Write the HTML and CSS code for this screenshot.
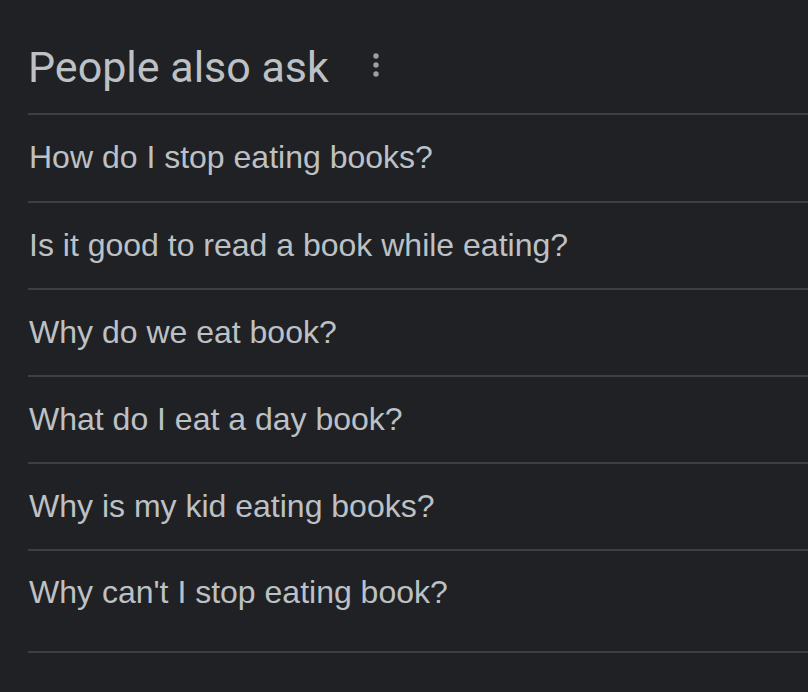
FILE: index.html
```html
<!DOCTYPE html>
<html>
<head>
<meta charset="utf-8">
<link rel="stylesheet" href="styles.css">
</head>
<body>
<section class="paa">
  <div class="paa-head">
    <h2 class="paa-title">People also ask</h2>
    <button class="paa-more" aria-label="More options">
      <svg width="6" height="24" viewBox="0 0 6 24"><circle cx="3" cy="3" r="2.7" fill="#9aa0a6"/><circle cx="3" cy="12" r="2.7" fill="#9aa0a6"/><circle cx="3" cy="21" r="2.7" fill="#9aa0a6"/></svg>
    </button>
  </div>
  <div class="paa-list">
    <div class="paa-item paa-first">How do I stop eating books?</div>
    <div class="paa-item">Is it good to read a book while eating?</div>
    <div class="paa-item">Why do we eat book?</div>
    <div class="paa-item">What do I eat a day book?</div>
    <div class="paa-item">Why is my kid eating books?</div>
    <div class="paa-item paa-last">Why can't I stop eating book?</div>
  </div>
</section>
</body>
</html>
```
FILE: styles.css
```css
html, body {
  margin: 0;
  padding: 0;
  background: #202124;
}
body {
  width: 808px;
  height: 692px;
  overflow: hidden;
}
.paa {
  padding-left: 28px;
}
.paa-head {
  display: flex;
  align-items: center;
  height: 115px;
  border-bottom: 2px solid #3c4043;
  box-sizing: border-box;
  padding-top: 21px;
}
.paa-title {
  margin: 0;
  font-family: Roboto, "Open Sans", sans-serif;
  font-weight: 400;
  font-size: 43px;
  color: #bdc1c6;
  letter-spacing: 0;
}
.paa-more {
  margin-left: 44px;
  padding: 0;
  border: 0;
  background: none;
  display: flex;
  margin-top: -4px;
}
.paa-item {
  height: 87px;
  box-sizing: border-box;
  border-bottom: 2px solid #3c4043;
  display: flex;
  align-items: center;
  padding-left: 1px;
  padding-bottom: 1px;
  font-family: "Liberation Sans", Arial, sans-serif;
  font-size: 32px;
  color: #bdc1c6;
}
.paa-first {
  height: 88px;
}
.paa-last {
  height: 102px;
  padding-bottom: 18px;
}
```
